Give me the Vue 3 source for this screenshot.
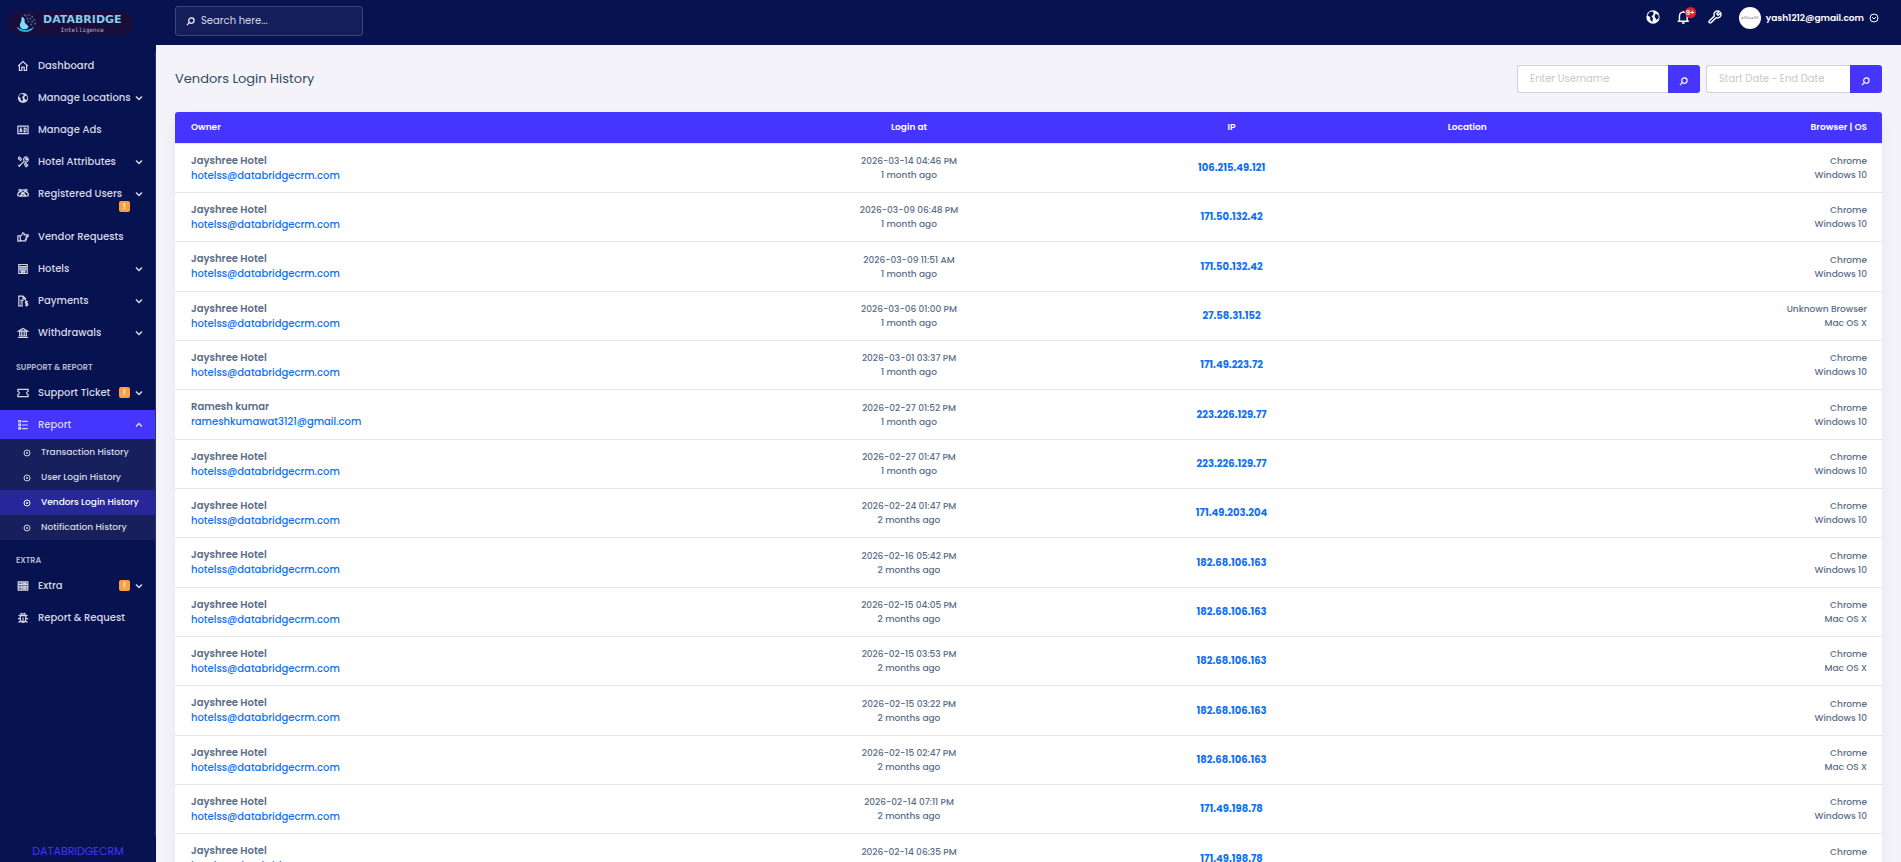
<script setup>
const icons = {
  home: 'M2 10 L10 2.500 L18 10 M4 9 V17.500 H8 V12 H12 V17.500 H16 V9',
  ad: 'M1.500 3.500 H18.500 V16 H1.500 Z M4.500 13.500 L6.500 7 L8.500 13.500 M5 11.500 H8 M12 7 V13 H13.500 Q15.500 12.500 15.500 10 Q15.500 7 13.500 7 Z',
  tools: 'M3 17.500 L12.500 8 M2 15 L5 18 M12 8 A4 4 0 0 1 17 2 L14.500 5 L15.500 6.500 L18.500 4.500 A4 4 0 0 1 13 9.500 M2 2.500 L4.500 2 L8 6 M2 2.500 L3 5 L7 8 M12 12 L15 18 L18 15.500 L13.500 11',
  users: 'M10 5.500 m-2.500 0 a2.500 2.500 0 1 0 5 0 a2.500 2.500 0 1 0 -5 0 M5 4 m-1.800 0 a1.800 1.800 0 1 0 3.600 0 a1.800 1.800 0 1 0 -3.600 0 M15 4 m-1.800 0 a1.800 1.800 0 1 0 3.600 0 a1.800 1.800 0 1 0 -3.600 0 M6 15 Q6 9 10 9 Q14 9 14 15 M1 13 Q1 7 5.500 7 M19 13 Q19 7 14.500 7 M1 13 H5 M15 13 H19 M8.500 10 V15 M11.500 10 V15',
  hand: 'M1.500 8 H5.500 V17 H1.500 Z M5.500 9 Q9 7 9.500 3 Q12 2.500 12 6.500 H18.500 V9 H14.500 M16.500 9 V11.500 H14 M15.500 11.500 V14 H13 M14.500 14 V16.500 H8 L5.500 15.500',
  hotel: 'M3 2.500 H17 V17.500 H3 Z M3 6 H17 M6.500 6 V14 M10 6 V17 M13.500 6 V14 M3 10 H17 M7.500 17 V13.500 H12.500 V17',
  payments: 'M10 18 H3 V2 H10 L14 6 V9 M10 2 V6.500 H14 M5.500 9 H11 M5.500 12 H10 M5.500 15 H10 M18 11 Q14 10 14 12.500 Q14 14 16 14 Q18.500 14.500 18 16.500 Q17 18 13.500 17 M16 9 V19',
  bank: 'M2 7 L10 2.500 L18 7 Z M4.500 8 V15 M8 8 V15 M12 8 V15 M15.500 8 V15 M3 15 H17 M1.500 17.500 H18.500',
  ticket: 'M1.500 4 H18.500 V7.500 Q16 8 16 10 Q16 12 18.500 12.500 V16 H1.500 V12.500 Q4 12 4 10 Q4 8 1.500 7.500 Z',
  list: 'M3 2.500 H6 V5 H3 Z M3 8.500 H6 V11 H3 Z M3 14.500 H6 V17 H3 Z M8.500 4 H18 M8.500 10 H18 M8.500 16 H18',
  server: 'M2 3 H18 V17 H2 Z M2 7.500 H18 M2 12 H18 M7 3 V17 M9 5.500 H16 M9 10 H16 M9 14.500 H16 M4 5.500 H5 M4 10 H5 M4 14.500 H5',
  bug: 'M6.500 6 Q6.500 3 10 3 Q13.500 3 13.500 6 M5.500 6 H14.500 V12 Q14 17.500 10 17.500 Q6 17.500 5.500 12 Z M10 9 V17 M1.500 11 H5.500 M14.500 11 H18.500 M2.500 5 L5.500 7 M17.500 5 L14.500 7 M2.500 17.500 L6 14.500 M17.500 17.500 L14 14.500 M6 1.500 L8 3.500 M14 1.500 L12 3.500',
}

const groups = [
  {
    items: [
      { label: 'Dashboard', icon: 'home' },
      { label: 'Manage Locations', icon: 'globe', arrow: true },
      { label: 'Manage Ads', icon: 'ad' },
      { label: 'Hotel Attributes', icon: 'tools', arrow: true },
      { label: 'Registered Users', icon: 'users', arrow: true, badge: true, wrap: true },
      { label: 'Vendor Requests', icon: 'hand' },
      { label: 'Hotels', icon: 'hotel', arrow: true },
      { label: 'Payments', icon: 'payments', arrow: true },
      { label: 'Withdrawals', icon: 'bank', arrow: true },
    ],
  },
  {
    title: 'SUPPORT & REPORT',
    items: [
      { label: 'Support Ticket', icon: 'ticket', arrow: true, badge: true },
      {
        label: 'Report',
        icon: 'list',
        arrow: true,
        open: true,
        children: ['Transaction History', 'User Login History', 'Vendors Login History', 'Notification History'],
      },
    ],
  },
  {
    title: 'EXTRA',
    items: [
      { label: 'Extra', icon: 'server', arrow: true, badge: true },
      { label: 'Report & Request', icon: 'bug' },
    ],
  },
]
const current = 'Vendors Login History'

const jay = ['Jayshree Hotel', 'hotelss@databridgecrm.com']
const ramesh = ['Ramesh kumar', 'rameshkumawat3121@gmail.com']
const rows = [
  [jay, '2026-03-14 04:46 PM', '1 month ago', '106.215.49.121', 'Chrome', 'Windows 10'],
  [jay, '2026-03-09 06:48 PM', '1 month ago', '171.50.132.42', 'Chrome', 'Windows 10'],
  [jay, '2026-03-09 11:51 AM', '1 month ago', '171.50.132.42', 'Chrome', 'Windows 10'],
  [jay, '2026-03-06 01:00 PM', '1 month ago', '27.58.31.152', 'Unknown Browser', 'Mac OS X'],
  [jay, '2026-03-01 03:37 PM', '1 month ago', '171.49.223.72', 'Chrome', 'Windows 10'],
  [ramesh, '2026-02-27 01:52 PM', '1 month ago', '223.226.129.77', 'Chrome', 'Windows 10'],
  [jay, '2026-02-27 01:47 PM', '1 month ago', '223.226.129.77', 'Chrome', 'Windows 10'],
  [jay, '2026-02-24 01:47 PM', '2 months ago', '171.49.203.204', 'Chrome', 'Windows 10'],
  [jay, '2026-02-16 05:42 PM', '2 months ago', '182.68.106.163', 'Chrome', 'Windows 10'],
  [jay, '2026-02-15 04:05 PM', '2 months ago', '182.68.106.163', 'Chrome', 'Mac OS X'],
  [jay, '2026-02-15 03:53 PM', '2 months ago', '182.68.106.163', 'Chrome', 'Mac OS X'],
  [jay, '2026-02-15 03:22 PM', '2 months ago', '182.68.106.163', 'Chrome', 'Windows 10'],
  [jay, '2026-02-15 02:47 PM', '2 months ago', '182.68.106.163', 'Chrome', 'Mac OS X'],
  [jay, '2026-02-14 07:11 PM', '2 months ago', '171.49.198.78', 'Chrome', 'Windows 10'],
  [jay, '2026-02-14 06:35 PM', '2 months ago', '171.49.198.78', 'Chrome', 'Windows 10'],
]
</script>

<template>
  <div class="layout">
    <aside class="sidebar">
      <a class="logo" href="#" aria-label="Databridge Intelligence">
        <svg class="logo-mark" viewBox="0 0 22 22" aria-hidden="true">
          <path d="M1 14 Q2 20 10 20 Q17 20 19 14 Q15 18 10 18 Q5 18 1 14Z" fill="#35b5e5" />
          <path d="M6 4 Q10 5 9 10 L13 14 Q13 17 9 17 Q4 17 4 12 Q6 9 6 4Z" fill="#7be0f5" />
          <g fill="#3b6f9d">
            <circle cx="11" cy="3" r="1" /><circle cx="14" cy="2" r="1" /><circle cx="17" cy="4" r="1" />
            <circle cx="12" cy="6" r="1" /><circle cx="15" cy="6" r="1" /><circle cx="19" cy="7" r="1" />
            <circle cx="13" cy="9" r="1" /><circle cx="17" cy="9" r="1" /><circle cx="20" cy="11" r="1" />
            <circle cx="16" cy="12" r="1" /><circle cx="9" cy="2" r="1" />
          </g>
        </svg>
        <span class="logo-text">
          <span class="logo-name">DATABRIDGE</span>
          <span class="logo-sub">Intelligence</span>
        </span>
      </a>

      <nav class="menu">
        <ul v-for="(group, g) in groups" :key="g">
          <li v-if="group.title" class="heading">{{ group.title }}</li>
          <li v-for="item in group.items" :key="item.label" class="entry">
            <a href="#" class="item" :class="{ open: item.open, wrap: item.wrap }">
              <svg v-if="item.icon === 'globe'" class="icon" viewBox="0 0 20 20">
                <circle cx="10" cy="10" r="8.500" fill="currentColor" />
                <path d="M5 4 L10 3 L11 6 L8 9 L10 11 L9 16 L6 13 L6 10 L3 8Z M14 6 L17 8 L17 12 L14 13 L12 9Z" class="land" />
              </svg>
              <svg v-else class="icon" viewBox="0 0 20 20"><path :d="icons[item.icon]" class="stroke" /></svg>
              <span class="label">{{ item.label }}</span>
              <span v-if="item.badge" class="badge">!</span>
              <svg v-if="item.arrow" class="chevron" viewBox="0 0 8 8">
                <path :d="item.open ? 'M1 5.500 L4 2.500 L7 5.500' : 'M1 2.500 L4 5.500 L7 2.500'" />
              </svg>
            </a>
            <ul v-if="item.children" class="submenu">
              <li v-for="child in item.children" :key="child">
                <a href="#" :class="{ current: child === current }">
                  <svg class="dot" viewBox="0 0 8 8">
                    <circle cx="4" cy="4" r="3" /><circle cx="4" cy="4" r="1" class="core" />
                  </svg>
                  {{ child }}
                </a>
              </li>
            </ul>
          </li>
        </ul>
      </nav>
      <div class="version">DATABRIDGECRM</div>
    </aside>

    <div class="page">
      <header class="topbar">
        <label class="search">
          <svg viewBox="0 0 10 10" class="lens"><circle cx="6" cy="4" r="3" /><path d="M4 6 L1 9" /></svg>
          <input type="search" placeholder="Search here..." aria-label="Search" />
        </label>
        <div class="tools">
          <button type="button" class="tool" aria-label="Visit website">
            <svg viewBox="0 0 20 20" class="tool-icon">
              <circle cx="10" cy="10" r="9.500" fill="currentColor" />
              <path d="M5 3 L10 2 L11 6 L8 9 L10 12 L9 17 L6 14 L6 10 L2 8Z M14 5 L18 8 L18 12 L15 14 L12 9Z" class="land" />
            </svg>
          </button>
          <button type="button" class="tool" aria-label="Notifications">
            <svg viewBox="0 0 20 20" class="tool-icon">
              <path d="M1 16 H17 M3.500 16 V9 Q3.500 3 9 3 Q14.500 3 14.500 9 V16 M9 1 V3 M7 18.500 H11" class="stroke" />
            </svg>
            <span class="count">9+</span>
          </button>
          <button type="button" class="tool" aria-label="System settings">
            <svg viewBox="0 0 20 20" class="tool-icon">
              <path d="M2 15.500 L9 8.500 Q7.500 4 11 2 Q13.500 .8 16 2 L12.500 5.500 L14.500 7.500 L18 4 Q19.500 7.500 17 10 Q14.500 12 11.500 11 L4.500 18 Q2.500 19 1.500 17.500 Q1 16.500 2 15.500Z" class="stroke" />
            </svg>
          </button>
          <button type="button" class="profile">
            <span class="avatar">400x400</span>
            <span>yash1212@gmail.com</span>
            <svg viewBox="0 0 10 10" class="caret"><circle cx="5" cy="5" r="4" /><path d="M3 4 L5 6 L7 4" /></svg>
          </button>
        </div>
      </header>

      <main class="content">
        <div class="title-row">
          <h1>Vendors Login History</h1>
          <form class="filters" @submit.prevent>
            <div class="field">
              <input type="text" placeholder="Enter Username" aria-label="Username" />
              <button type="submit" aria-label="Search by username">
                <svg viewBox="0 0 10 10" class="lens"><circle cx="6" cy="4" r="3" /><path d="M4 6 L1 9" /></svg>
              </button>
            </div>
            <div class="field date">
              <input type="text" placeholder="Start Date - End Date" aria-label="Date range" />
              <button type="submit" aria-label="Search by date">
                <svg viewBox="0 0 10 10" class="lens"><circle cx="6" cy="4" r="3" /><path d="M4 6 L1 9" /></svg>
              </button>
            </div>
          </form>
        </div>

        <div class="card">
          <table>
            <colgroup>
              <col class="c-owner" /><col class="c-login" /><col class="c-ip" /><col class="c-loc" /><col />
            </colgroup>
            <thead>
              <tr><th>Owner</th><th>Login at</th><th>IP</th><th>Location</th><th>Browser | OS</th></tr>
            </thead>
            <tbody>
              <tr v-for="(row, i) in rows" :key="i">
                <td>
                  <strong class="owner">{{ row[0][0] }}</strong>
                  <a href="#" class="email">{{ row[0][1] }}</a>
                </td>
                <td>{{ row[1] }}<br />{{ row[2] }}</td>
                <td><a href="#" class="ip">{{ row[3] }}</a></td>
                <td></td>
                <td>{{ row[4] }}<br />{{ row[5] }}</td>
              </tr>
            </tbody>
          </table>
        </div>
      </main>
    </div>
  </div>
</template>

<style>
html,
body {
  margin: 0;
  height: 100%;
  overflow: hidden;
}
#app {
  height: 100%;
}
</style>

<style scoped>
* {
  box-sizing: border-box;
}
.layout {
  display: flex;
  height: 100vh;
  overflow: hidden;
  background: #f3f3f9;
  color: #5b6e88;
  font-family: Poppins, Inter, sans-serif;
  font-size: 10px;
}
a {
  color: inherit;
  text-decoration: none;
}
ul {
  list-style: none;
  margin: 0;
  padding: 0;
}
button,
input {
  font: inherit;
  color: inherit;
  border: 0;
  padding: 0;
  margin: 0;
  background: none;
}
svg {
  display: block;
  flex: none;
}
.stroke,
.lens,
.chevron,
.caret,
.dot {
  fill: none;
  stroke: currentColor;
}
.stroke {
  stroke-width: 2;
}
.land {
  fill: #071251;
}

.sidebar {
  flex: none;
  width: 156px;
  display: flex;
  flex-direction: column;
  background: #071251;
  color: #d6d8e4;
}
.logo {
  flex: none;
  display: flex;
  align-items: center;
  gap: 6px;
  height: 24px;
  margin: 11px 22px 16px 7px;
  padding-left: 9px;
  border-radius: 12px;
  background: #190d3c;
}
.logo-mark {
  width: 21px;
  height: 21px;
}
.logo-text {
  display: flex;
  flex-direction: column;
  align-items: center;
}
.logo-name {
  font-family: "DejaVu Sans", sans-serif;
  font-size: 11px;
  line-height: 12px;
  font-weight: 700;
  color: #86cdec;
}
.logo-sub {
  font-family: "DejaVu Sans Mono", monospace;
  font-size: 6px;
  line-height: 7px;
  color: #b9b5cd;
}
.menu {
  flex: 1;
  border-right: 1px solid #2b356b;
}
.entry {
  margin-bottom: 3px;
}
.item {
  display: flex;
  align-items: center;
  height: 29px;
  padding: 0 12px 0 17px;
  font-size: 10px;
  line-height: 14px;
  font-weight: 500;
}
.item.wrap {
  flex-wrap: wrap;
  height: 40px;
  align-content: flex-start;
  padding-top: 8px;
}
.item.open {
  background: #4634ff;
}
.icon {
  width: 12px;
  height: 12px;
  margin-right: 9px;
}
.label {
  flex: 1;
  white-space: nowrap;
}
.badge {
  width: 11px;
  height: 11px;
  margin-right: 5px;
  border-radius: 2px;
  background: #ff9f43;
  color: #fff;
  font-size: 9px;
  line-height: 11px;
  text-align: center;
}
.wrap .badge {
  order: 3;
  margin-left: 102px;
}
.chevron {
  width: 8px;
  height: 8px;
  stroke-width: 1.5;
}
.heading {
  height: 28px;
  padding: 13px 16px 5px;
  font-size: 8px;
  line-height: 10px;
  font-weight: 600;
  color: #b5b8cb;
}
.submenu {
  padding-top: 1px;
  background: #171f5c;
}
.submenu a {
  display: flex;
  align-items: center;
  gap: 10px;
  height: 25px;
  padding-left: 23px;
  font-size: 9px;
  font-weight: 500;
}
.submenu a.current {
  background: #27279a;
  color: #fff;
}
.dot {
  width: 8px;
  height: 8px;
}
.dot .core {
  fill: currentColor;
  stroke: none;
}
.version {
  height: 25px;
  font-size: 11px;
  line-height: 28px;
  text-align: center;
  color: #4634ff;
}

.page {
  flex: 1;
  min-width: 0;
}
.topbar {
  display: flex;
  justify-content: space-between;
  align-items: flex-start;
  height: 45px;
  padding: 6px 22px 0 19px;
  background: #071251;
  color: #fff;
}
.search {
  display: flex;
  align-items: center;
  gap: 6px;
  width: 188px;
  height: 30px;
  padding: 0 10px;
  border: 1px solid #3c4577;
  border-radius: 3px;
  background: #151f5b;
}
.search input {
  flex: 1;
  min-width: 0;
  outline: 0;
  font-size: 10px;
}
.search input::placeholder {
  color: #d3d5e2;
  opacity: 1;
}
.lens {
  width: 9px;
  height: 9px;
  stroke-width: 1.3;
}
.tools {
  display: flex;
  align-items: center;
  gap: 17px;
}
.tool {
  position: relative;
  height: 24px;
  padding-bottom: 3px;
}
.tool-icon {
  width: 14px;
  height: 14px;
}
.count {
  position: absolute;
  top: 1px;
  right: -5px;
  width: 11px;
  height: 11px;
  border-radius: 50%;
  background: #ea1f25;
  font-size: 7px;
  line-height: 11px;
  font-weight: 600;
}
.profile {
  display: flex;
  align-items: center;
  gap: 5px;
  font-size: 9px;
  font-weight: 600;
}
.avatar {
  width: 22px;
  height: 22px;
  border-radius: 50%;
  background: #fff;
  color: #999;
  font-size: 4px;
  line-height: 22px;
}
.caret {
  width: 10px;
  height: 10px;
}

.content {
  padding: 20px 19px 0;
}
.title-row {
  display: flex;
  justify-content: space-between;
  align-items: center;
  margin-bottom: 19px;
}
h1 {
  margin: 0;
  font-size: 13px;
  line-height: 16px;
  font-weight: 400;
  color: #34495e;
}
.filters {
  display: flex;
  gap: 6px;
}
.field {
  display: flex;
  width: 183px;
  height: 28px;
}
.field.date {
  width: 176px;
}
.field input {
  flex: 1;
  min-width: 0;
  padding: 0 12px;
  border: 1px solid #ced4da;
  border-right: 0;
  border-radius: 3px 0 0 3px;
  background: #fff;
  font-size: 10px;
}
.field input::placeholder {
  color: #c9c9c9;
  opacity: 1;
}
.field button {
  display: grid;
  place-items: center;
  width: 32px;
  padding: 4px 2px 0 0;
  border-radius: 0 3px 3px 0;
  background: #4634ff;
  color: #fff;
}
.card {
  border-radius: 3px;
  background: #fff;
  box-shadow: 0 6px 16px rgba(18, 38, 63, 0.06);
}
table {
  width: 100%;
  table-layout: fixed;
  border-collapse: separate;
  border-spacing: 0;
}
.c-owner {
  width: 33%;
}
.c-login {
  width: 20%;
}
.c-ip {
  width: 17.8%;
}
.c-loc {
  width: 9.8%;
}
th {
  height: 32px;
  padding: 0 0 2px;
  border-bottom: 1px solid #e5e5e5;
  background: #4634ff;
  color: #fff;
  font-size: 9px;
  line-height: 14px;
  font-weight: 600;
}
th:first-child {
  border-top-left-radius: 3px;
}
th:last-child {
  border-top-right-radius: 3px;
}
td {
  height: 49px;
  padding: 0;
  border-bottom: 1px solid #e5e5e5;
  font-size: 9px;
  line-height: 14px;
  font-weight: 500;
  text-align: center;
}
tbody tr:nth-child(3n) td {
  height: 50px;
}
th:first-child,
td:first-child {
  padding-left: 16px;
  text-align: left;
}
td:first-child {
  padding-bottom: 1px;
}
th:last-child,
td:last-child {
  padding-right: 15px;
  text-align: right;
}
.owner,
.email {
  display: block;
  font-size: 10px;
  line-height: 15px;
}
.owner {
  font-weight: 600;
}
.email {
  color: #1070f5;
}
.ip {
  color: #1070f5;
  font-size: 10px;
  font-weight: 700;
}
</style>
